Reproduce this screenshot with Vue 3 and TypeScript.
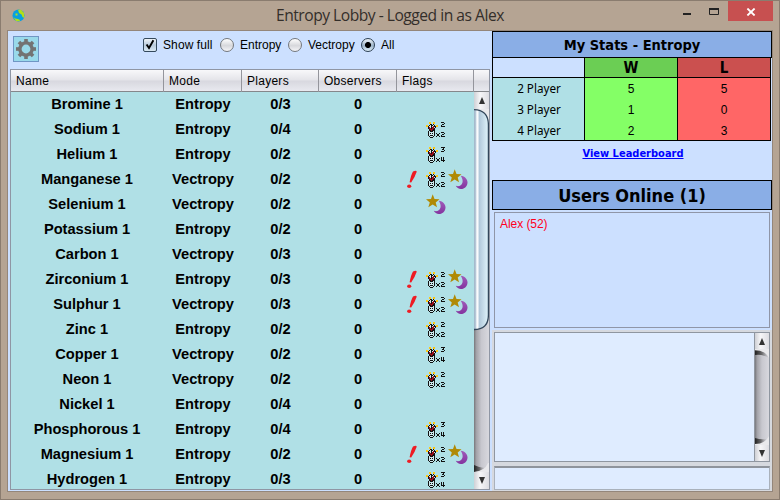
<script setup lang="ts">
interface Game {
  name: string
  mode: 'Entropy' | 'Vectropy'
  players: string
  observers: number
  flags: string[]
}

const g = (name: string, mode: Game['mode'], players: string, flags: string = ''): Game => ({
  name: name + ' 1', mode, players, observers: 0, flags: flags ? flags.split(' ') : [],
})

const games: Game[] = [
  g('Bromine', 'Entropy', '0/3'),
  g('Sodium', 'Entropy', '0/4', 'j2'),
  g('Helium', 'Entropy', '0/2', 'j3'),
  g('Manganese', 'Vectropy', '0/2', 'ex j2 moon'),
  g('Selenium', 'Vectropy', '0/2', 'moon'),
  g('Potassium', 'Entropy', '0/2'),
  g('Carbon', 'Vectropy', '0/3'),
  g('Zirconium', 'Entropy', '0/3', 'ex j2 moon'),
  g('Sulphur', 'Vectropy', '0/3', 'ex j2 moon'),
  g('Zinc', 'Entropy', '0/2', 'j2'),
  g('Copper', 'Vectropy', '0/2', 'j3'),
  g('Neon', 'Vectropy', '0/2', 'j2'),
  g('Nickel', 'Entropy', '0/4'),
  g('Phosphorous', 'Entropy', '0/4', 'j3'),
  g('Magnesium', 'Entropy', '0/2', 'ex j2 moon'),
  g('Hydrogen', 'Entropy', '0/3', 'j3'),
]

const stats = [
  { label: '2 Player', w: 5, l: 5 },
  { label: '3 Player', w: 1, l: 0 },
  { label: '4 Player', w: 2, l: 3 },
]

const columns = ['Name', 'Mode', 'Players', 'Observers', 'Flags']

const jester = [
  '...yy..yy...',
  '...yy..yy...',
  '....kk.k....',
  'yy.kwkkwk.yy',
  'yykwwkwrkkyy',
  '..krwkrrwk..',
  '..krrkrrk...',
  '...krrrkk...',
  '...kkrkkk...',
  '..kwkkkwk...',
  '..kwwwwwk...',
  '..kwkwkwk...',
  '..kwwwwwk...',
  '..kwkkkwk...',
  '...kwwwk....',
  '....kkk.....',
]
const colours: Record<string, string> = { y: '#ffc814', k: '#111', w: '#cfeaee', r: '#9c0c18' }
const jesterPixels = jester.flatMap((row, y) =>
  [...row].flatMap((c, x) => (c === '.' ? [] : [{ x, y, fill: colours[c] }])),
)
</script>

<template>
  <div class="window">
    <header class="titlebar">
      <svg class="globe" width="13" height="13" viewBox="0 0 13 13">
        <circle cx="6.5" cy="6.5" r="6" fill="#08a0e0" />
        <path d="M6 .8L9 .7L12 4L12.3 9L10.5 8L9.5 5.5L7 4ZM1 8L3 9.5L6 10L8 11L7.5 12.3L4 12Z" fill="#b0df18" />
        <path d="M3.5 4.5h2v2h-2Z" fill="#b0df18" />
      </svg>
      <h1>Entropy Lobby - Logged in as Alex</h1>
      <div class="controls">
        <svg width="38" height="20" viewBox="0 0 38 20">
          <path d="M1 13h8" stroke="#222" stroke-width="2" />
          <path d="M27.5 7.5h9v6h-9zM27 7.5h10" fill="none" stroke="#222" />
          <path d="M27 7h10v2h-10z" fill="#222" />
        </svg>
        <button class="close">
          <svg width="10" height="8" viewBox="0 0 10 8"><path d="M1.4 .5L8.6 7.5M8.6 .5L1.4 7.5" stroke="#fff" stroke-width="1.8" /></svg>
        </button>
      </div>
    </header>

    <div class="client">
      <section class="left">
        <div class="toolbar">
          <button class="gear">
            <svg width="20" height="20" viewBox="-10 -10 20 20">
              <circle r="6.1" fill="none" stroke="#737373" stroke-width="3.4" />
              <rect v-for="a in 8" :key="a" x="-1.8" y="-10" width="3.6" height="3.6" fill="#737373" :transform="`rotate(${a * 45})`" />
            </svg>
          </button>
          <div class="filters">
            <label class="full"><svg width="14" height="14" viewBox="0 0 14 14"><rect x=".5" y=".5" width="13" height="13" rx="1.5" fill="url(#box)" stroke="#34495c" /><path d="M3.6 6.5L6 10L10.4 2.2" fill="none" stroke="#000" stroke-width="1.9" /></svg>Show full</label>
            <label class="ent"><i class="radio"></i>Entropy</label>
            <label class="vec"><i class="radio"></i>Vectropy</label>
            <label class="all"><i class="radio on"></i>All</label>
          </div>
        </div>
        <div class="table">
          <div class="thead">
            <span v-for="c in columns" :key="c">{{ c }}</span><span></span>
          </div>
          <div class="tbody">
            <div class="rows">
              <div v-for="game in games" :key="game.name" class="row">
                <span class="name">{{ game.name }}</span>
                <span>{{ game.mode }}</span>
                <span>{{ game.players }}</span>
                <span>{{ game.observers }}</span>
                <span class="flags">
                  <svg v-for="f in game.flags" :key="f" width="20" height="20"><use :href="'#' + f" /></svg>
                </span>
              </div>
            </div>
            <div class="scroll">
              <div class="arrow"><i class="up"></i></div>
              <svg class="track" width="15" height="363" viewBox="0 0 15 363">
                <rect width="15" height="363" fill="url(#track)" />
                <path d="M0 356Q6 359 11 359Q6 363 0 363Z" fill="url(#shade)" />
                <path d="M0 363Q11 362 14 354H15V363Z" fill="#e9e9ec" />
                <path d="M0 0H15V16Q11 1 0 1Z" fill="#e9e9ec" />
                <path d="M0 .7Q14.4 1 14.4 16V206Q14.4 220.5 0 220.5" fill="url(#thumb)" stroke="#32465a" stroke-width="1.3" />
              </svg>
              <div class="arrow"><i class="down"></i></div>
            </div>
          </div>
        </div>
      </section>

      <section class="right">
        <h2 class="stats-title">My Stats - Entropy</h2>
        <div class="stats">
          <div class="shead"><span></span><span class="w">W</span><span class="l">L</span></div>
          <div class="sbody">
            <div class="scol names"><span v-for="s in stats" :key="s.label">{{ s.label }}</span></div>
            <div class="scol wins"><span v-for="s in stats" :key="s.label">{{ s.w }}</span></div>
            <div class="scol losses"><span v-for="s in stats" :key="s.label">{{ s.l }}</span></div>
          </div>
        </div>
        <div class="linkrow"><a>View Leaderboard</a></div>
        <h2 class="users-title">Users Online (1)</h2>
        <div class="users"><span>Alex (52)</span></div>
        <div class="chat">
          <div class="log">
            <div class="scroll">
              <div class="arrow"><i class="up"></i></div>
              <svg class="track" width="14" height="96" viewBox="0 0 14 96">
                <rect width="14" height="96" fill="url(#track)" />
                <path d="M0 1H10L14 9Q8 5 0 6Z" fill="url(#shade)" />
                <path d="M0 95H10L12 90Q6 91 0 89Z" fill="url(#shade)" />
                <path d="M0 0H14V9Q10 1.3 0 1.3Z" fill="#e9e9ec" />
                <path d="M0 96H14V87Q10 95 0 95Z" fill="#e9e9ec" />
              </svg>
              <div class="arrow"><i class="down"></i></div>
            </div>
          </div>
          <div class="input"></div>
        </div>
      </section>
    </div>

    <svg class="defs" width="0" height="0">
      <defs>
        <linearGradient id="box" x2="0" y2="1"><stop stop-color="#f4f7fa" /><stop offset=".5" stop-color="#b9cbdc" /><stop offset="1" stop-color="#dcebf5" /></linearGradient>
        <linearGradient id="track"><stop stop-color="#77777b" /><stop offset=".15" stop-color="#a2a2a8" /><stop offset=".5" stop-color="#c8c8cf" /><stop offset="1" stop-color="#d8d8de" /></linearGradient>
        <linearGradient id="shade"><stop stop-color="#222" /><stop offset=".5" stop-color="#444" stop-opacity=".7" /><stop offset="1" stop-color="#888" stop-opacity="0" /></linearGradient>
        <linearGradient id="thumb"><stop stop-color="#9db4c7" /><stop offset=".13" stop-color="#b9cbda" /><stop offset=".2" stop-color="#fff" /><stop offset=".28" stop-color="#f4f8fb" /><stop offset=".36" stop-color="#b1c8da" /><stop offset="1" stop-color="#e0f4fb" /></linearGradient>
        <linearGradient id="moonfill" x2="0" y2="1"><stop stop-color="#a05cba" /><stop offset="1" stop-color="#84339f" /></linearGradient>
        <g id="jester" shape-rendering="crispEdges">
          <rect v-for="(p, i) in jesterPixels" :key="i" :x="p.x" :y="p.y + 3" width="1" height="1" :fill="p.fill" />
          <path d="M10 14.5h1m2 0h1M11 15.5h2M11 16.5h2M10 17.5h1m2 0h1" stroke="#111" />
        </g>
        <path id="two" d="M0 .5h3M3 1.5h1M1 2.5h2M0 3.5h1M0 4.5h4" stroke="#111" shape-rendering="crispEdges" />
        <g id="j2"><use href="#jester" /><use href="#two" x="15" y="3" /><use href="#two" x="15" y="13" /></g>
        <g id="j3">
          <use href="#jester" />
          <path d="M15 3.5h4M17 4.5h1M16 5.5h2M18 6.5h1M15 7.5h3M15.5 13v3M17.5 13v5M15 16.5h4" fill="none" stroke="#111" shape-rendering="crispEdges" />
        </g>
        <g id="ex" fill="#ee1c24"><path d="M9 2.6Q12.4 1 12.7 2.8Q11 8 7.2 13.6L5.6 13.2Q7 6 9 2.6Z" /><ellipse cx="5.2" cy="17.3" rx="2.1" ry="1.8" /></g>
        <g id="moon">
          <path d="M12.6 6.7C21 7.6 21.5 17 15.5 19.4C12.5 20.6 9 19.6 7.8 16.8C11 17.8 13.5 16.6 14.4 13.8C15 11.5 14.4 9 12.6 6.7Z" fill="url(#moonfill)" />
          <path d="M6.7 .2L8.5 4.9L13.5 5.2L9.7 8.4L11 13.3L6.7 10.6L2.3 13.3L3.8 8.4L0 5.2L5 4.9Z" fill="#b08a05" />
        </g>
      </defs>
    </svg>
  </div>
</template>

<style>
body { margin: 0; overflow: hidden; }
</style>

<style scoped>
.window { box-sizing: border-box; position: relative; width: 780px; height: 500px; padding: 0 7px 7px; border: 1px solid #8a7c6f; background: #b5a493; font: 12px/16px "Liberation Sans", Arial, sans-serif; color: #000; }
.defs { position: absolute; }
button { padding: 0; margin: 0; border: 0; display: flex; align-items: center; justify-content: center; box-sizing: border-box; }
h1, h2 { margin: 0; }
.titlebar { display: flex; height: 29px; align-items: flex-start; }
.globe { margin: 8px 0 0 4px; }
h1 { flex: 1; margin-left: 251px; font: 15.6px/29px "Open Sans", "Noto Sans", sans-serif; color: #332e2a; letter-spacing: -0.48px; white-space: nowrap; }
.controls { display: flex; margin-right: -1px; }
.controls > svg { margin-right: 8px; }
.close { width: 45px; height: 20px; background: #c75050; }
.close svg { margin-top: 1px; }
.client { display: flex; border: 1px solid #94867a; background: #cce0ff; margin: 0 0 0 -1px; box-sizing: border-box; width: 766px; height: 462px; }
.left { width: 484px; flex: none; box-sizing: border-box; padding: 0 2px; }
.toolbar { display: flex; height: 38px; }
.gear { width: 26px; height: 26px; margin: 5px 0 0 3px; background: #99d9ea; border: 1px solid #7096c4; flex: none; }
.filters { display: flex; padding-top: 7px; margin-left: 104px; font-size: 12px; }
label { display: flex; align-items: center; gap: 6px; height: 14px; white-space: nowrap; }
.full { width: 77px; letter-spacing: .1px; }
.ent { width: 68px; }
.vec { width: 73px; }
.radio { width: 14px; height: 14px; box-sizing: border-box; border: 1px solid #73777c; border-radius: 50%; background: linear-gradient(#fff, #d7d8dc 55%, #f5f5f8); flex: none; }
.radio.on { border-color: #2d4054; background: radial-gradient(circle at 50% 50%, #000 0 2.6px, transparent 3.4px), linear-gradient(#eef4f9, #9cb3c9 55%, #dff0fa); }
.table { box-sizing: border-box; width: 480px; height: 421px; border: 1px solid #8f96a4; }
.thead { display: grid; grid-template-columns: 153px 78px 77px 78px 77px 15px; height: 22px; box-sizing: border-box; border-bottom: 1px solid #85878b; background: linear-gradient(#f8f8fa, #e4e4e9 48%, #d8d8df 52%, #e8e9ef); }
.thead span { box-sizing: border-box; border-right: 1px solid #94959c; padding-left: 5px; line-height: 22px; letter-spacing: .27px; }
.thead span:last-child { border: 0; }
.tbody { display: flex; height: 397px; overflow: hidden; }
.rows { width: 463px; background: #b0e0e6; height: 397px; overflow: hidden; }
.row { display: grid; grid-template-columns: 153px 78px 77px 78px 77px; height: 25px; line-height: 25px; text-align: center; font-weight: bold; font-size: 14.65px; }
.name { padding-right: 1px; }
.flags { display: flex; justify-content: center; gap: 2px; padding: 2px 0 0 1px; }
.flags svg { flex: none; }
.scroll { display: flex; flex-direction: column; width: 15px; height: 397px; background: #d5d5dc; }
.arrow { height: 17px; flex: none; display: flex; align-items: center; justify-content: center; background: linear-gradient(90deg, #cfd0d5, #f6f6f8 40%, #dddde2); }
.arrow i { border: 3.5px solid transparent; }
.arrow .up { border-bottom: 7px solid #333; border-top: 0; }
.arrow .down { border-top: 7px solid #333; border-bottom: 0; }
.track { flex: 1; display: block; min-height: 0; }
.right { width: 280px; flex: none; display: flex; flex-direction: column; }
h2 { box-sizing: border-box; border: 1px solid #000; background: #8aaee6; text-align: center; font-family: "DejaVu Sans Condensed", "DejaVu Sans", sans-serif; font-stretch: condensed; font-weight: bold; white-space: nowrap; }
.stats-title { height: 27px; line-height: 26px; font-size: 14.5px; }
.stats { width: 279px; box-sizing: border-box; border: 1px solid #000; border-top: 0; height: 83px; font-family: "DejaVu Sans Condensed", "DejaVu Sans", sans-serif; font-stretch: condensed; text-align: center; }
.shead { display: grid; grid-template-columns: 91px 94px 92px; grid-template-rows: 19px; height: 19px; border-bottom: 1px solid #000; font-weight: bold; font-size: 15px; line-height: 20px; }
.shead .w { background: #6bce54; border: solid #000; border-width: 0 1px; }
.shead .l { background: #cb504f; }
.sbody { display: grid; grid-template-columns: 91px 94px 92px; height: 62px; }
.scol { display: flex; flex-direction: column; font-size: 12px; }
.scol span { height: 21px; line-height: 22px; }
.scol span:last-child { height: 20px; }
.names { background: #b0e0e6; }
.names span { padding-left: 1px; font-family: "Noto Sans", sans-serif; font-size: 11.7px; line-height: 21px; }
.wins { background: #84ff66; border: solid #000; border-width: 0 1px; }
.wins, .losses { font-family: "Liberation Sans", sans-serif; }
.losses { background: #ff6666; }
.linkrow { height: 39px; text-align: center; padding-top: 4px; box-sizing: border-box; padding-left: 2px; }
.linkrow a { color: #00f; font: bold 11px/16px "DejaVu Sans Condensed", sans-serif; font-stretch: condensed; text-decoration: underline; }
.users-title { height: 30px; line-height: 29px; font-size: 18px; }
.users { box-sizing: border-box; height: 116px; margin: 2px 2px 0 2px; border: 1px solid #8f96a8; padding: 3px 5px; color: #ff0022; letter-spacing: -.05px; }
.chat { flex: 1; margin-top: 2px; background: #d6d9df; padding: 2px 2px 0 2px; }
.log { box-sizing: border-box; height: 130px; border: 1px solid #8f96a0; background: #dfecff; display: flex; justify-content: flex-end; }
.log .scroll { height: 128px; width: 15px; box-sizing: border-box; border-left: 1px solid #8f96a0; }
.log .arrow { height: 16px; }
.input { box-sizing: border-box; height: 24px; margin-top: 4px; background: #dfecff; border: 1px solid #a9b1bb; border-top: 2px solid #8f949c; }
</style>
